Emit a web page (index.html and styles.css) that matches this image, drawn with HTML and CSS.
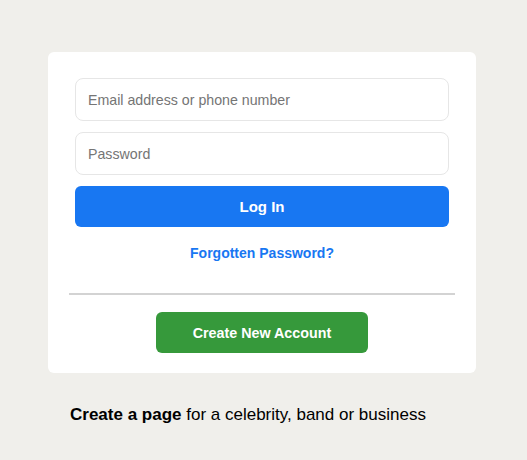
FILE: index.html
```html
<!DOCTYPE html>
<html>
<head>
<meta charset="utf-8">
<link rel="stylesheet" href="styles.css">
</head>
<body>
<main class="page">
  <div class="card">
    <form class="form">
      <input class="field" type="text" placeholder="Email address or phone number">
      <input class="field" type="password" placeholder="Password">
      <button class="btn-login" type="button">Log In</button>
      <a class="forgot" href="#">Forgotten Password?</a>
    </form>
    <hr class="divider">
    <div class="create-wrap">
      <button class="btn-create" type="button">Create New Account</button>
    </div>
  </div>
  <p class="note"><b>Create a page</b> for a celebrity, band or business</p>
</main>
</body>
</html>
```
FILE: styles.css
```css
html, body {
  margin: 0;
  padding: 0;
  background: #f0efeb;
  font-family: "Liberation Sans", Arial, sans-serif;
}
.page {
  padding: 52px 0 0 48px;
}
.card {
  width: 428px;
  box-sizing: border-box;
  background: #fff;
  border-radius: 6px;
  padding: 26px 21px 20px;
}
.form {
  display: flex;
  flex-direction: column;
  margin: 0 6px;
}
.field {
  height: 43px;
  box-sizing: border-box;
  border: 1px solid #e6e6e6;
  border-radius: 8px;
  padding: 0 12px;
  font-family: inherit;
  font-size: 14.2px;
  color: #1c1e21;
  margin-bottom: 11px;
  outline: none;
}
.field::placeholder {
  color: #757575;
}
.btn-login {
  height: 41px;
  border: none;
  border-radius: 6px;
  background: #1877f2;
  color: #fff;
  font-family: inherit;
  font-weight: bold;
  font-size: 15px;
}
.forgot {
  display: block;
  margin-top: 18px;
  text-align: center;
  line-height: 16px;
  font-size: 14px;
  font-weight: bold;
  color: #1877f2;
  text-decoration: none;
}
.divider {
  border: none;
  border-top: 2px solid #d3d3d3;
  margin: 32px 0 17px;
}
.create-wrap {
  display: flex;
  justify-content: center;
}
.btn-create {
  width: 212px;
  height: 41px;
  border: none;
  border-radius: 6px;
  background: #36993b;
  color: #fff;
  font-family: inherit;
  font-weight: bold;
  font-size: 14.3px;
}
.note {
  margin: 32px 0 0 22px;
  font-size: 17px;
  line-height: 20px;
  color: #000;
}
```
